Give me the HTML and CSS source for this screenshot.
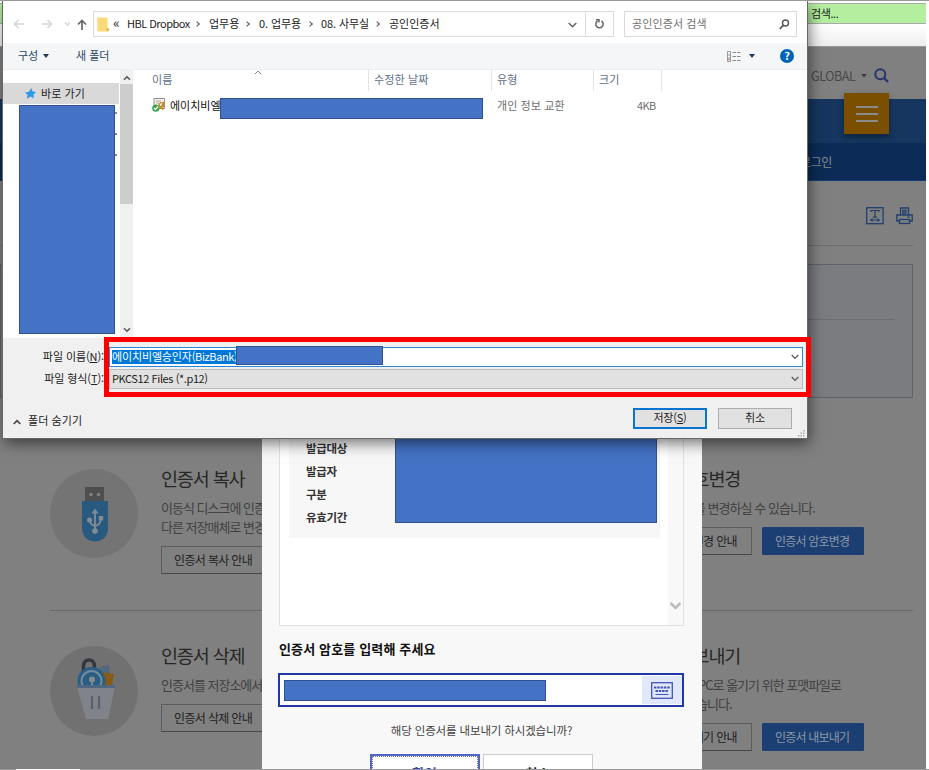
FILE: index.html
```html
<!DOCTYPE html>
<html lang="ko">
<head>
<meta charset="utf-8">
<title>인증서 내보내기</title>
<link rel="stylesheet" href="styles.css">
</head>
<body>
<div class="desktop">
  <div class="browser">
    <div class="browser-address"><span>검색...</span></div>
    <div class="browser-tabs"></div>
    <div class="util">
      <span class="util-text">GLOBAL</span>
      <svg class="util-caret" width="7" height="4" viewBox="0 0 7 4"><path d="M0 0h6L3 3.6z" fill="#3f3f3f"/></svg>
      <svg width="15" height="15" viewBox="0 0 15 15" fill="none" stroke="#26356f" stroke-width="2"><circle cx="6.3" cy="6.3" r="5"/><path d="M10 10l4 4" stroke-width="2.4"/></svg>
    </div>
    <div class="header"><div class="menu-button"><i></i><i></i><i></i></div></div>
    <div class="subnav">로그인</div>
    <div class="tools">
      <svg width="18" height="18" viewBox="0 0 18 18" fill="none" stroke="#213f6d"><rect x=".7" y=".7" width="16.4" height="16" stroke-width="1.3"/><path d="M5 5V3.500h8V5M9 3.500V10M7 10.200h4M4.500 13h9" stroke-width="1.200"/><path d="M6.500 11v4l-2.500-2zM11.500 11v4l2.500-2z" fill="#213f6d" stroke="none"/></svg>
      <svg width="17" height="18" viewBox="0 0 17 18" fill="none" stroke="#213f6d" stroke-width="1.300"><path d="M4.500 8V1h8v7M3.500 14H.8V8h15.400v6h-2.700"/><rect x="3.500" y="12.500" width="10" height="4"/><path d="M6.800 3.500h3v2.500h-3zM11.500 10h2" /></svg>
    </div>
    <div class="notice"><div class="notice-rule"></div></div>
    <div class="cards">
      <section class="card">
        <svg class="badge" width="88" height="90" viewBox="0 0 88 90"><ellipse cx="44" cy="44.500" rx="44" ry="44.500" fill="#747474"/><path d="M35 18h19v15H35z" fill="#4e4e4e"/><circle cx="41" cy="25.500" r="1.700" fill="#858585"/><circle cx="48.500" cy="25.500" r="1.700" fill="#858585"/><path d="M32 32h26v27c0 18-26 18-26 0z" fill="#28597f"/><g fill="none" stroke="#858d93" stroke-width="1.800"><path d="M45 62V42M45 57c-4-1-5.500-3-5.500-6.500M45 57c4-1 6-3 6-8"/></g><g fill="#858d93"><path d="M45 39.500l3.500 5h-7z"/><circle cx="45" cy="62" r="2.800"/><circle cx="39.500" cy="51" r="2.500"/><path d="M48.800 47h4.400v4.400h-4.400z"/></g></svg>
        <div class="copy"><h2>인증서 복사</h2><p>이동식 디스크에 인증서를<br>다른 저장매체로 변경</p><div class="actions"><span class="btn">인증서 복사 안내</span></div></div>
      </section>
      <section class="card right">
        <div class="copy"><h2>인증서 암호변경</h2><p>인증서의 암호를 변경하실 수 있습니다.</p><div class="actions"><span class="btn wide">인증서 암호변경 안내</span><span class="btn primary">인증서 암호변경</span></div></div>
      </section>
      <section class="card second">
        <svg class="badge" width="88" height="90" viewBox="0 0 88 90"><ellipse cx="44" cy="45" rx="44" ry="45" fill="#717171"/><path d="M49 21l10-2 2 20H47z" fill="#526780"/><path d="M52 26l12 2-2 12H48z" fill="#875b15"/><path d="M33.500 26v-6c0-8 11-8 11 0v3" fill="none" stroke="#303740" stroke-width="3.500"/><circle cx="41.500" cy="35" r="14" fill="#285e84"/><circle cx="41.500" cy="35" r="10" fill="none" stroke="#748b9c" stroke-width="2"/><circle cx="42" cy="33.500" r="3" fill="#858b91"/><path d="M42 34l2 8h-4z" fill="#858b91"/><path d="M27 41h38l-7 32H36z" fill="#81838a"/><path d="M27 39h38v3H27z" fill="#4e6782"/><path d="M42 50v13M49 50v13" stroke="#596170" stroke-width="2.200"/></svg>
        <div class="copy"><h2>인증서 삭제</h2><p>인증서를 저장소에서 삭제</p><div class="actions"><span class="btn">인증서 삭제 안내</span></div></div>
      </section>
      <section class="card right second">
        <div class="copy"><h2>인증서 내보내기</h2><p><span class="lead">인증서를 다른 PC로 옮기기 위한 포맷파일로</span><br>내보내실 수 있습니다.</p><div class="actions"><span class="btn wide">인증서 내보내기 안내</span><span class="btn primary">인증서 내보내기</span></div></div>
      </section>
    </div>
  </div>

  <div class="modal">
    <div class="cert-box">
      <div class="cert-list"><b>발급대상</b><b>발급자</b><b>구분</b><b>유효기간</b></div>
      <div class="cert-scroll"><svg width="11" height="8" viewBox="0 0 11 8"><path d="M.5 1l5 5 5-5" fill="none" stroke="#bbb" stroke-width="2.500"/></svg></div>
    </div>
    <h3>인증서 암호를 입력해 주세요</h3>
    <div class="password">
      <div class="password-mask"></div>
      <div class="keyboard"><svg width="22" height="17" viewBox="0 0 22 17" fill="none" stroke="#4355b4"><rect x=".7" y=".7" width="20.600" height="15.600" stroke-width="1.300"/><path d="M3 5.500h16M4.500 9h13" stroke-width="2.200" stroke-dasharray="2.500 .8"/><path d="M4.500 12.500h13" stroke-width="1.100"/></svg></div>
    </div>
    <p class="question">해당 인증서를 내보내기 하시겠습니까?</p>
    <div class="modal-buttons"><div class="modal-button ok"><span>확인</span></div><div class="modal-button">취소</div></div>
    <div class="mask mask-cert"></div>
  </div>

  <div class="dialog">
    <div class="address-row">
      <div class="arrows">
        <svg width="64" height="14" viewBox="0 0 64 14" fill="none" stroke="#d5d5d5" stroke-width="1.500"><path d="M11 7H1.500M5.500 3l-4 4 4 4M29 7h9.500M34.500 3l4 4-4 4M52 5.500L54.500 8 57 5.500"/></svg>
        <svg class="up" width="10" height="12" viewBox="0 0 10 12" fill="none" stroke="#666" stroke-width="1.700"><path d="M5 11V1.500M1 5.500l4-4 4 4"/></svg>
      </div>
      <div class="path">
        <svg width="12" height="15" viewBox="0 0 12 15"><path d="M0 .5h10.500V11H12v3.500H0z" fill="#f9d978"/><path d="M.5 1v13" stroke="#fbe7a4"/><path d="M9.500 11H12v3H9.500z" fill="#e9bd55"/></svg>
        <span class="c-back">«</span><span class="c1">HBL Dropbox</span><i class="sep"></i><span class="c2">업무용</span><i class="sep"></i><span class="c3">0. 업무용</span><i class="sep"></i><span class="c4">08. 사무실</span><i class="sep"></i><span class="c5">공인인증서</span>
        <svg class="path-drop" width="9" height="6" viewBox="0 0 9 6"><path d="M.7 1l3.800 3.700L8.300 1" fill="none" stroke="#666" stroke-width="1.600"/></svg>
        <div class="refresh"><svg width="11" height="12" viewBox="0 0 11 12" fill="none" stroke="#666" stroke-width="1.500"><path d="M7.500 3A3.700 3.700 0 1 1 3.500 3M2 1.700h3v2.800"/></svg></div>
      </div>
      <div class="search"><span>공인인증서 검색</span><svg width="11" height="11" viewBox="0 0 11 11" fill="none" stroke="#555"><circle cx="6.500" cy="4" r="3" stroke-width="1.400"/><path d="M4.300 6.300L.8 10" stroke-width="1.700"/></svg></div>
    </div>
    <div class="commands">
      <span class="organize">구성</span><i class="tri"></i><span class="new-folder">새 폴더</span>
      <svg class="view" width="14" height="11" viewBox="0 0 14 11" fill="none"><path d="M.5.500h3v10h-3zM1 4h2M1 7.200h2" stroke="#999"/><path d="M5.500 1.500h8M5.500 5.500h8M5.500 9.500h8" stroke="#8a8a8a" stroke-dasharray="3.500 1"/><path d="M1 8.800h2" stroke="#df8a75"/></svg>
      <i class="tri dark"></i>
      <span class="help">?</span>
    </div>
    <div class="content">
      <div class="nav">
        <div class="quick"><svg width="11" height="11" viewBox="0 0 11 11"><path d="M6.200 0l1.400 3.400L11 4 8.500 6.500l.3 3.700-3.100-1.700L1.800 11l.9-4L0 4.500l4-.7z" fill="#2b9be8"/></svg><span>바로 가기</span></div>
        <div class="pins"><i></i><i></i><i></i></div>
      </div>
      <div class="scroll"><svg width="8" height="6" viewBox="0 0 8 6"><path d="M1 4.800L4 1.800l3 3" fill="none" stroke="#555" stroke-width="1.600"/></svg><div class="thumb"></div><svg class="down" width="8" height="6" viewBox="0 0 8 6"><path d="M1 1.200l3 3 3-3" fill="none" stroke="#555" stroke-width="1.600"/></svg></div>
      <div class="files">
        <div class="columns"><span class="name">이름<svg width="8" height="5" viewBox="0 0 8 5"><path d="M.7 4.300L4 1l3.300 3.300" fill="none" stroke="#888"/></svg></span><span>수정한 날짜</span><span>유형</span><span>크기</span></div>
        <div class="file">
          <span class="file-name"><svg width="14" height="14" viewBox="0 0 14 14"><path d="M2 .5h10.500v10H2z" fill="#f3f1ee" stroke="#958c84"/><path d="M4 3h5M4 5h3" stroke="#aaa"/><path d="M8.500 10l4-6M7.500 8.500l4 3" stroke="#c78d2c" stroke-width="1.700"/><circle cx="9.500" cy="7" r="2.300" fill="none" stroke="#c78d2c" stroke-width="1.300"/><circle cx="3.800" cy="10.200" r="3.600" fill="#3aa348"/><path d="M2 10l1.500 1.500 2.500-3" stroke="#fff" stroke-width="1.200" fill="none"/></svg>에이치비엘</span>
          <span class="file-type">개인 정보 교환</span><span class="file-size">4KB</span>
        </div>
      </div>
    </div>
    <div class="footer">
      <div class="field"><label>파일 이름(<u>N</u>):</label><div class="combo active"><mark>에이치비엘승인자<span>(BizBank)</span></mark><svg width="8" height="6" viewBox="0 0 8 6"><path d="M.7 1L4 4.300 7.300 1" fill="none" stroke="#555" stroke-width="1.200"/></svg></div></div>
      <div class="field"><label>파일 형식(<u>T</u>):</label><div class="combo"><span>PKCS12 Files (*.p12)</span><svg width="8" height="6" viewBox="0 0 8 6"><path d="M.7 1L4 4.300 7.300 1" fill="none" stroke="#555" stroke-width="1.200"/></svg></div></div>
      <div class="footer-actions">
        <svg width="8" height="6" viewBox="0 0 8 6"><path d="M.7 5L4 1.700 7.300 5" fill="none" stroke="#444" stroke-width="1.600"/></svg>
        <span class="hide">폴더 숨기기</span>
        <div class="dialog-button save">저장(<u>S</u>)</div><div class="dialog-button">취소</div>
      </div>
      <svg class="grip" width="7" height="7" viewBox="0 0 7 7" fill="#aaa"><path d="M5 0h1.500v1.500H5zM2.500 2.500H4V4H2.500zM5 2.500h1.500V4H5zM0 5h1.500v1.500H0zM2.500 5H4v1.500H2.500zM5 5h1.500v1.500H5z"/></svg>
    </div>
    <div class="mask mask-nav"></div>
    <div class="mask mask-file"></div>
    <div class="highlight"></div>
    <div class="mask mask-name"></div>
  </div>
  <div class="edge"></div>
</div>
</body>
</html>
```
FILE: styles.css
```css
* { box-sizing: border-box; }
body { margin: 0; background: #fff; }
h2, h3, p { margin: 0; }
svg { display: block; flex: none; }
i { font-style: normal; }

.desktop {
  position: relative;
  width: 929px;
  height: 770px;
  overflow: hidden;
  border-top: 1px solid #999;
  font-family: "Noto Sans CJK KR", sans-serif;
}
.edge {
  position: absolute;
  left: 0;
  right: 0;
  bottom: 0;
  height: 1px;
  background: linear-gradient(90deg, #999 16px, #fff 16px, #fff 80px, #999 80px);
}

/* underlying bank page */
.browser { width: 926px; height: 769px; background: #808080; overflow: hidden; }
.browser-address {
  height: 23px;
  border-top: 2px solid #fff;
  border-bottom: 1px solid #aaa;
  background: #b3ef9f;
  box-shadow: inset 0 1px #aaa;
  padding-left: 811px;
  font-size: 11px;
  line-height: 21px;
  color: #222;
  letter-spacing: -0.4px;
}
.browser-tabs { height: 23px; background: linear-gradient(#fff, #eee); border-bottom: 1px solid #999; }
.util { height: 52px; padding: 5px 0 0 811px; display: flex; align-items: center; color: #494949; font-size: 12.5px; }
.util-text { width: 50px; letter-spacing: -0.45px; }
.util-caret { margin-right: 6px; }
.header { height: 44px; background: #16365f; display: flex; padding-left: 844px; }
.menu-button {
  width: 45px;
  height: 41px;
  margin-top: -6px;
  background: #7a5000;
  box-shadow: 0 3px 6px rgba(0, 0, 0, .4);
  display: flex;
  flex-direction: column;
  align-items: center;
  justify-content: center;
  gap: 5px;
  position: relative;
}
.menu-button i { width: 22px; height: 2px; background: #8a8a8a; }
.subnav { height: 38px; background: #0c2b56; border-bottom: 1px solid #143c74; padding-left: 800px; line-height: 37px; font-size: 12px; letter-spacing: -0.4px; color: #868b93; }
.tools { width: 913px; height: 65px; padding: 26px 0 0 0; display: flex; justify-content: flex-end; gap: 12px; border-bottom: 1px solid #6d6d6d; }
.notice { width: 913px; height: 134px; margin-top: 18px; padding: 54px 18px 0; background: #7b7c80; border: 1px solid #60636d; }
.notice-rule { height: 1px; background: #6c6d70; }
.cards { width: 863px; margin: 34px 0 0 50px; display: grid; grid-template-columns: 575px 1fr; grid-template-rows: 179px 180px; }
.card { display: flex; padding-top: 37px; border-bottom: 1px solid #696969; }
.card.second { padding-top: 35px; border: 0; }
.badge { margin-right: 23px; }
.copy { white-space: nowrap; }
.copy h2 { height: 24px; margin-top: -4px; font-size: 18.5px; line-height: 26px; font-weight: 400; letter-spacing: -1.15px; color: #272727; }
.copy p { margin-top: 9px; font-size: 13px; line-height: 19px; letter-spacing: -1px; color: #414141; min-height: 39px; }
.lead { padding-left: 2px; }
.actions { display: flex; gap: 10px; margin-top: 9px; }
.btn { height: 28px; width: 105px; padding-left: 12px; border: 1px solid #5c5c5c; border-bottom-color: #484848; border-radius: 1px; font-size: 12px; line-height: 26px; letter-spacing: -0.65px; color: #222; }
.btn.wide { width: 127px; }
.btn.primary { width: 102px; background: #1b3f72; border-color: #1b3f72; color: #8d97a5; letter-spacing: -0.8px; }
.right .copy p { min-height: 20px; letter-spacing: -0.95px; }
.second:not(.right) .copy p { min-height: 20px; }
.second.right .copy p { min-height: 39px; letter-spacing: -1px; }

/* certificate export modal */
.modal { position: absolute; left: 262px; top: 0; width: 440px; height: 769px; padding: 0 18px 0 17px; background: #f8f8f8; overflow: hidden; }
.cert-box { height: 625px; border: 1px solid #e0e0e0; background: #fff; display: flex; justify-content: space-between; padding-left: 9px; }
.cert-list { width: 371px; height: 536px; background: #f7f7f7; padding: 435px 0 0 17px; display: flex; flex-direction: column; font-size: 11.5px; line-height: 23px; letter-spacing: -0.3px; color: #333; }
.cert-scroll { width: 15px; background: #f8f8f8; display: flex; align-items: flex-end; justify-content: center; padding-bottom: 15px; }
.modal h3 { margin-top: 12px; height: 23px; font-size: 13px; line-height: 22px; letter-spacing: 0.15px; color: #111; }
.password { height: 34px; margin: 12px 0 0 -1px; border: 2px solid #2037a8; background: #fff; display: flex; align-items: center; justify-content: space-between; padding-left: 4px; }
.password-mask, .mask { background: #4472c4; border: 1px solid #2f528f; }
.password-mask { width: 262px; height: 21px; margin-top: 1px; }
.keyboard { width: 40px; height: 28px; background: #e2e8fb; display: flex; align-items: center; justify-content: center; }
.question { margin-top: 12px; text-align: center; font-size: 11.5px; line-height: 22px; letter-spacing: -0.15px; color: #444; }
.modal-buttons { display: flex; gap: 3px; justify-content: center; margin: 13px 0 0 -1px; }
.modal-button { width: 110px; height: 38px; padding-top: 6px; border: 1px solid #ccc; background: #fff; font-size: 13.5px; line-height: 24px; font-weight: 700; text-align: center; color: #222; }
.modal-button.ok { border: 2px solid #5066c8; padding: 0; color: #2f45a9; }
.ok span { display: block; height: 34px; border: 1px dotted #777; padding-top: 4px; }
.mask { position: absolute; }
.mask-cert { left: 133px; top: 430px; width: 262px; height: 92px; }

/* save dialog */
.dialog { position: absolute; left: 3px; top: 0; width: 804px; height: 437px; background: #fff; box-shadow: 0 0 0 1px #686868, 2px 5px 14px rgba(0, 0, 0, .55); font-size: 11px; color: #222; white-space: nowrap; }
.address-row { height: 42px; display: flex; align-items: flex-start; padding: 10px 10px 0 10px; }
.arrows { width: 80px; height: 26px; display: flex; align-items: center; }
.up { margin: 1px 0 0; }
.path { width: 521px; height: 26px; border: 1px solid #d9d9d9; display: flex; align-items: center; padding-left: 3px; }
.path span { margin-top: -2px; }
.path .c-back { width: 22px; padding-left: 4px; font-size: 14px; line-height: 20px; margin-top: -4px; }
.path .c1 { width: 67px; margin-left: -4px; letter-spacing: -0.5px; }
.sep { width: 4px; height: 4px; border: solid #555; border-width: 1px 1px 0 0; transform: rotate(45deg); }
.c2, .c3, .c4, .c5 { margin-left: 10px; }
.c1 + .sep { margin-left: 1px; }
.c2 { width: 36px; }
.c3 { width: 49px; letter-spacing: -0.1px; }
.c4 { width: 54px; letter-spacing: -0.1px; margin-left: 9px; }
.path-drop { margin: 1px 8px 0 auto; }
.refresh { width: 28px; height: 24px; border-left: 1px solid #d9d9d9; display: flex; align-items: center; justify-content: center; }
.search { width: 173px; height: 26px; margin-left: 10px; border: 1px solid #d9d9d9; padding: 0 6px 0 7px; display: flex; align-items: center; justify-content: space-between; color: #707070; }
.search span { margin-top: -2px; letter-spacing: 0.1px; }
.commands { height: 27px; background: #f5f6f7; border-bottom: 1px solid #eee; display: flex; align-items: center; padding-left: 15px; color: #294666; }
.commands > span:not(.help) { margin-top: -2px; }
.organize { width: 25px; }
.tri { border: 3.5px solid transparent; border-top: 4px solid #1e395b; border-bottom: 0; }
.new-folder { margin-left: 27px; }
.view { margin-left: auto; }
.tri.dark { margin: 0 25px 0 8px; }
.help { width: 14px; height: 14px; margin-right: 13px; border-radius: 50%; background: #0063b8; color: #fff; text-align: center; font-size: 11px; line-height: 13px; font-weight: 700; }
.content { height: 268px; display: flex; }
.nav { width: 116px; padding-top: 13px; }
.quick { height: 21px; background: #d9d9d9; display: flex; align-items: center; padding-left: 22px; gap: 5px; }
.quick span { margin-top: -2px; letter-spacing: 0.05px; }
.pins { padding: 8px 2px 0 0; display: flex; flex-direction: column; align-items: flex-end; gap: 19px; }
.pins i { width: 2px; height: 2px; background: #888; }
.scroll { width: 13px; margin-left: 1px; background: #f0f0f0; display: flex; flex-direction: column; align-items: center; padding: 5px 0 5px; }
.thumb { width: 13px; height: 120px; margin-top: 3px; background: #cdcdcd; }
.down { margin-top: auto; }
.files { flex: 1; padding-left: 1px; }
.columns { height: 21px; display: grid; grid-template-columns: 235px 123px 102px 68px; color: #5b6f87; line-height: 19px; }
.columns span { padding-left: 5px; border-right: 1px solid #e5e5e5; letter-spacing: 0.15px; }
.columns .name { padding-left: 18px; display: flex; }
.name svg { margin-left: 81px; }
.file { height: 28px; display: grid; grid-template-columns: 363px 102px 68px; align-items: center; color: #6d6d6d; }
.file-name { display: flex; align-items: center; gap: 4px; padding-left: 18px; color: #111; }
.file-type { letter-spacing: 0.1px; }
.file-size { padding-left: 38px; letter-spacing: -0.6px; }
.footer { position: relative; height: 100px; padding: 9px 4px 0 0; background: #f0f0f0; }
.field { display: flex; height: 22px; align-items: flex-start; }
.field label { width: 106px; padding-right: 5px; text-align: right; line-height: 18px; letter-spacing: -0.1px; }
.combo { width: 694px; height: 20px; border: 1px solid #bcbcbc; background: #e1e1e1; padding: 0 3px 0 2px; display: flex; align-items: center; justify-content: space-between; }
.combo.active { background: #fff; border-color: #2b87d1; }
.combo mark { width: 124px; height: 14px; margin-top: -1px; line-height: 12px; color: #fff; background: #0078d7; letter-spacing: -0.15px; }
.combo span { margin-top: -2px; letter-spacing: -0.4px; }
.footer-actions { height: 21px; margin-top: 17px; display: flex; align-items: center; padding-left: 10px; }
.hide { margin: 2px auto 0 7px; letter-spacing: 0.1px; }
.footer-actions > svg { margin-top: 6px; }
.dialog-button { width: 74px; height: 21px; margin-right: 11px; border: 1px solid #adadad; background: #e1e1e1; text-align: center; line-height: 17px; }
.dialog-button.save { border: 2px solid #0b74d0; line-height: 15px; letter-spacing: -0.2px; }
.grip { position: absolute; right: 2px; bottom: 1px; }
.mask-nav { left: 16px; top: 104px; width: 96px; height: 229px; }
.mask-file { left: 217px; top: 97px; width: 263px; height: 21px; }
.mask-name { left: 233px; top: 345px; width: 147px; height: 19px; }
.highlight { position: absolute; left: 101px; top: 336px; width: 707px; height: 60px; border: 5px solid #f00; }
```
